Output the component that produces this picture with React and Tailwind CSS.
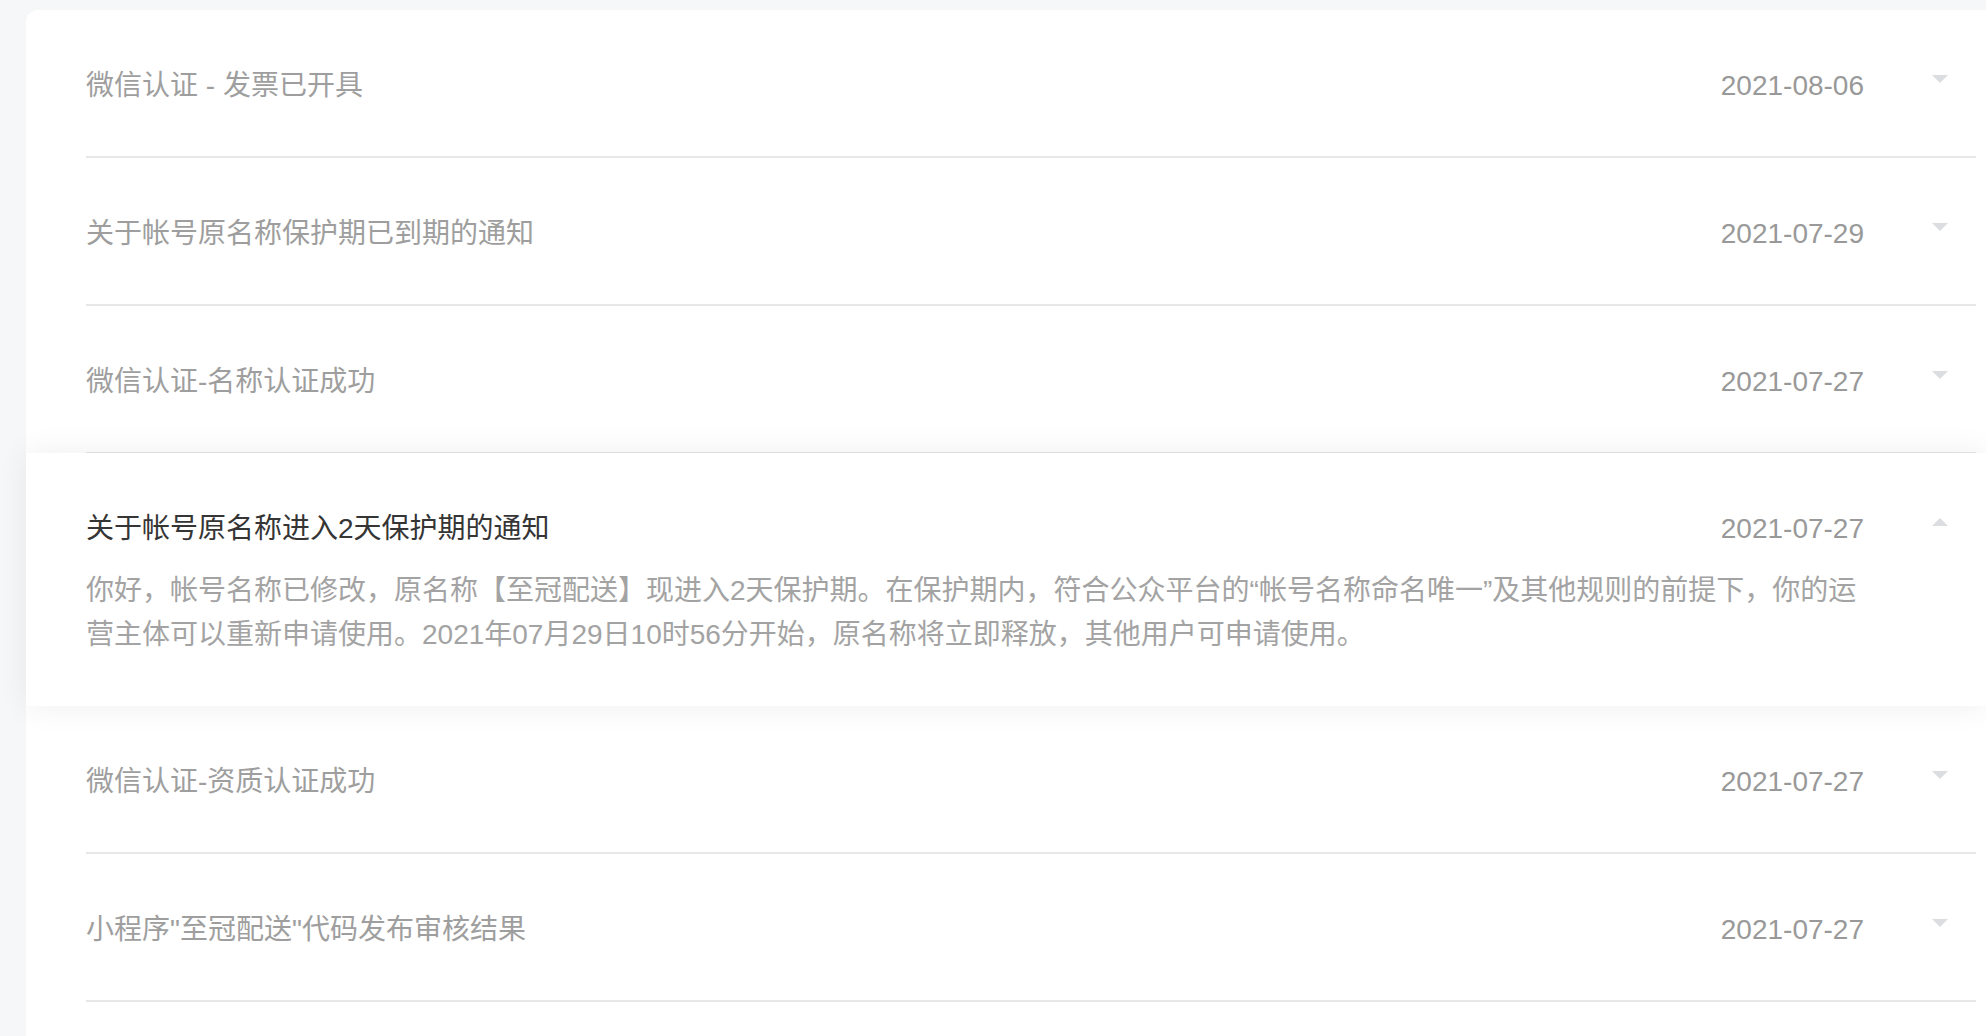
import React from "react";

const items = [
  { title: "微信认证 - 发票已开具", date: "2021-08-06" },
  { title: "关于帐号原名称保护期已到期的通知", date: "2021-07-29" },
  { title: "微信认证-名称认证成功", date: "2021-07-27" },
  {
    title: "关于帐号原名称进入2天保护期的通知",
    date: "2021-07-27",
    open: true,
    body: [
      "你好，帐号名称已修改，原名称【至冠配送】现进入2天保护期。在保护期内，符合公众平台的“帐号名称命名唯一”及其他规则的前提下，你的运",
      "营主体可以重新申请使用。2021年07月29日10时56分开始，原名称将立即释放，其他用户可申请使用。",
    ],
  },
  { title: "微信认证-资质认证成功", date: "2021-07-27" },
  { title: "小程序\"至冠配送\"代码发布审核结果", date: "2021-07-27" },
];

function Caret({ up }) {
  return (
    <svg width="16" height="8" viewBox="0 0 16 8" className="shrink-0 ml-[68px] mr-[28px] -mt-[14px]">
      {up ? (
        <path d="M0 8 L8 0 L16 8 Z" fill="#dcdde1" />
      ) : (
        <path d="M0 0 L16 0 L8 8 Z" fill="#dcdde1" />
      )}
    </svg>
  );
}

export default function App() {
  return (
    <div
      className="min-h-[1036px] w-full overflow-hidden bg-[#f6f7f9] pl-[26px] pt-[10px]"
      style={{ fontFamily: '"Liberation Sans", "Noto Sans CJK SC", sans-serif' }}
    >
      <div className="bg-white rounded-tl-[12px] min-h-[1100px]">
        {items.map((it, i) =>
          it.open ? (
            <div
              key={i}
              className="relative z-10 -mt-[1px] bg-white pl-[60px] pr-[10px] pt-[54px] pb-[49px] shadow-[0_0_30px_rgba(0,0,0,0.07)]"
            >
              <div className="flex items-center text-[28px] leading-[44px]">
                <div className="flex-1 text-[#353535]">{it.title}</div>
                <div className="text-[#999999]">{it.date}</div>
                <Caret up />
              </div>
              <div className="mt-[18px] mr-[112px] text-[28px] leading-[44px] text-[#a3a3a3]">
                {it.body.map((l, j) => (
                  <div key={j} className="whitespace-nowrap">{l}</div>
                ))}
              </div>
            </div>
          ) : (
            <div key={i} className="ml-[60px] mr-[10px]">
              <div className="flex items-center pt-[54px] pb-[48px] text-[28px] leading-[44px] border-b-2 border-[#e7e7e9]">
                <div className="flex-1 text-[#9e9e9e]">{it.title}</div>
                <div className="text-[#999999]">{it.date}</div>
                <Caret />
              </div>
            </div>
          )
        )}
      </div>
    </div>
  );
}
